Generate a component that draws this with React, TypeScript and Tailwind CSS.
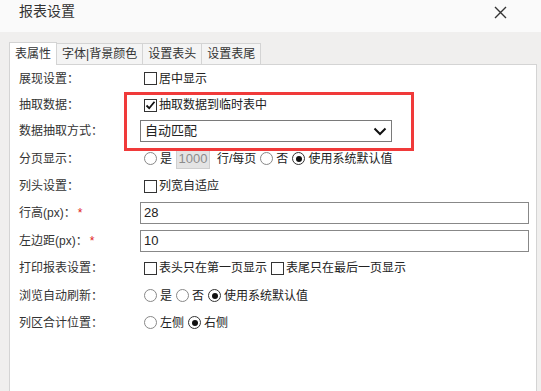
import React from "react";

const Checkbox = ({ checked = false }: { checked?: boolean }) => (
  <span className="ml-[4px] mr-[2px] inline-flex h-[13px] w-[13px] shrink-0 items-center justify-center border border-[#333] bg-white">
    {checked && (
      <svg width="11" height="11" viewBox="0 0 11 11">
        <path d="M1.5 5.5 L4.2 8.2 L9.5 1.8" fill="none" stroke="#111" strokeWidth="1.8" />
      </svg>
    )}
  </span>
);

const Radio = ({ checked = false }: { checked?: boolean }) => (
  <span
    className={`ml-[4px] mr-[3px] inline-flex h-[13px] w-[13px] shrink-0 items-center justify-center rounded-full border bg-white ${
      checked ? "border-[#333]" : "border-[#888]"
    }`}
  >
    {checked && <span className="h-[6px] w-[6px] rounded-full bg-[#111]" />}
  </span>
);

const Row = ({
  label,
  star = false,
  h,
  children,
}: {
  label: string;
  star?: boolean;
  h: string;
  children?: React.ReactNode;
}) => (
  <div className={`flex items-center ${h}`}>
    <div className="w-[121px] shrink-0 text-[12px] text-[#333]">
      {label}
      {star && <span className="ml-[2px] text-[#e02020]">*</span>}
    </div>
    <div className="flex flex-1 items-center text-[12px] text-[#222]">{children}</div>
  </div>
);

export default function App() {
  return (
    <div className="h-[391px] w-[541px] overflow-hidden bg-[#f0efee] font-['Liberation_Sans','Noto_Sans_CJK_SC',sans-serif] text-[#333]">
      {/* title bar */}
      <div className="flex h-[32px] items-start justify-between bg-[#fafafa] pl-[19px] pr-[34px] pt-[2px]">
        <span className="text-[14px] leading-[18px] text-[#333]">报表设置</span>
        <svg width="13" height="13" viewBox="0 0 13 13" className="mt-[4px]">
          <path d="M1 1 L12 12 M12 1 L1 12" stroke="#333" strokeWidth="1.4" />
        </svg>
      </div>

      <div className="pl-[9px] pr-[4px] pt-[10px]">
        {/* tabs */}
        <div className="flex h-[22px] items-end text-[12px] leading-none text-[#333]">
          <div className="relative z-10 -mb-px flex h-[23px] items-center border border-b-0 border-[#d4d4d4] bg-white px-[5px]">
            表属性
          </div>
          <div className="-ml-px flex h-[21px] items-center border border-b-0 border-[#d4d4d4] bg-[#f4f4f4] px-[5px]">
            字体|背景颜色
          </div>
          <div className="-ml-px flex h-[21px] items-center border border-b-0 border-[#d4d4d4] bg-[#f4f4f4] px-[5px]">
            设置表头
          </div>
          <div className="-ml-px flex h-[21px] items-center border border-b-0 border-[#d4d4d4] bg-[#f4f4f4] px-[5px]">
            设置表尾
          </div>
        </div>

        {/* panel */}
        <div className="relative h-[340px] border border-[#d4d4d4] bg-white pl-[9px]">
          <Row label="展现设置：" h="h-[27px]">
            <Checkbox />
            <span>居中显示</span>
          </Row>
          <Row label="抽取数据：" h="h-[26px]">
            <Checkbox checked />
            <span>抽取数据到临时表中</span>
          </Row>
          <Row label="数据抽取方式：" h="h-[26px]">
            <div className="flex h-[22px] w-[252px] items-center justify-between border border-[#7a7a7a] bg-white pl-[4px] pr-[4px] text-[13px] text-[#222]">
              <span>自动匹配</span>
              <svg width="14" height="9" viewBox="0 0 14 9">
                <path d="M1.5 1.5 L7 7 L12.5 1.5" fill="none" stroke="#111" strokeWidth="2" />
              </svg>
            </div>
          </Row>
          <Row label="分页显示：" h="h-[29px]">
            <Radio />
            <span>是</span>
            <span className="ml-[4px] flex h-[20px] w-[34px] items-center justify-center border border-[#cfcfcf] bg-[#e4e4e4] text-[13px] text-[#8c8c8c]">
              1000
            </span>
            <span className="ml-[7px]">行/每页</span>
            <Radio />
            <span>否</span>
            <Radio checked />
            <span>使用系统默认值</span>
          </Row>
          <Row label="列头设置：" h="h-[26px]">
            <Checkbox />
            <span>列宽自适应</span>
          </Row>
          <Row label="行高(px)：" star h="h-[28px]">
            <div className="flex h-[22px] w-[389px] items-center border border-[#888] bg-white pl-[3px] text-[13px] text-[#222]">
              28
            </div>
          </Row>
          <Row label="左边距(px)：" star h="h-[27px]">
            <div className="flex h-[22px] w-[389px] items-center border border-[#888] bg-white pl-[3px] text-[13px] text-[#222]">
              10
            </div>
          </Row>
          <Row label="打印报表设置：" h="h-[28px]">
            <Checkbox />
            <span>表头只在第一页显示</span>
            <Checkbox />
            <span>表尾只在最后一页显示</span>
          </Row>
          <Row label="浏览自动刷新：" h="h-[27px]">
            <Radio />
            <span>是</span>
            <Radio />
            <span>否</span>
            <Radio checked />
            <span>使用系统默认值</span>
          </Row>
          <Row label="列区合计位置：" h="h-[27px]">
            <Radio />
            <span>左侧</span>
            <Radio checked />
            <span>右侧</span>
          </Row>

          {/* red annotation box */}
          <div className="pointer-events-none absolute left-[114px] top-[27px] h-[59px] w-[290px] border-[3px] border-[#f03a3a]" />
        </div>
      </div>
    </div>
  );
}
